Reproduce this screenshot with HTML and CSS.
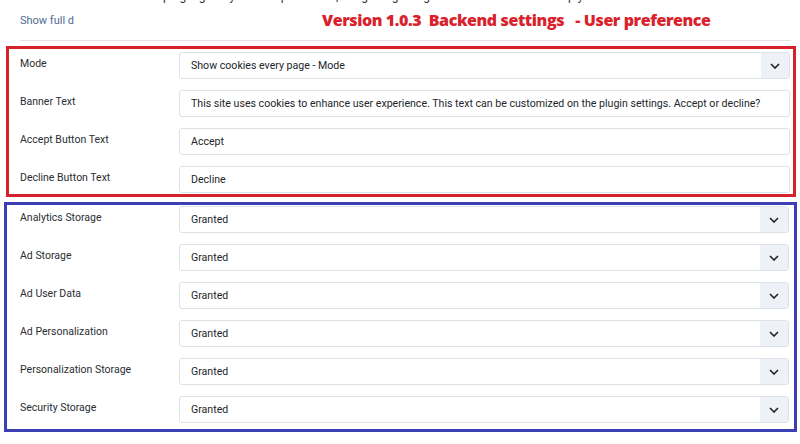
FILE: index.html
```html
<!DOCTYPE html>
<html>
<head>
<meta charset="utf-8">
<link rel="stylesheet" href="styles.css">
</head>
<body>
<div class="page">
  <p class="desc">The plugin gives you a simple banner, integrating Google Consent Mode v2 to help your site stay compliant.</p>
  <div class="header">
    <span class="more">Show full description</span>
    <span class="title">Version 1.0.3  Backend settings   - User preference</span>
  </div>
  <div class="divider"></div>

  <div class="box box-red">
    <div class="row">
      <label class="label">Mode</label>
      <div class="select"><span class="value">Show cookies every page - Mode</span><span class="arrow"><svg viewBox="0 0 10 6" width="10" height="6"><path d="M1 1 L5 5 L9 1" fill="none" stroke="#1f2328" stroke-width="1.6"/></svg></span></div>
    </div>
    <div class="row">
      <label class="label">Banner Text</label>
      <div class="input"><span class="value">This site uses cookies to enhance user experience. This text can be customized on the plugin settings. Accept or decline?</span></div>
    </div>
    <div class="row">
      <label class="label">Accept Button Text</label>
      <div class="input"><span class="value">Accept</span></div>
    </div>
    <div class="row">
      <label class="label">Decline Button Text</label>
      <div class="input"><span class="value">Decline</span></div>
    </div>
  </div>

  <div class="box box-blue">
    <div class="row">
      <label class="label">Analytics Storage</label>
      <div class="select"><span class="value">Granted</span><span class="arrow"><svg viewBox="0 0 10 6" width="10" height="6"><path d="M1 1 L5 5 L9 1" fill="none" stroke="#1f2328" stroke-width="1.6"/></svg></span></div>
    </div>
    <div class="row">
      <label class="label">Ad Storage</label>
      <div class="select"><span class="value">Granted</span><span class="arrow"><svg viewBox="0 0 10 6" width="10" height="6"><path d="M1 1 L5 5 L9 1" fill="none" stroke="#1f2328" stroke-width="1.6"/></svg></span></div>
    </div>
    <div class="row">
      <label class="label">Ad User Data</label>
      <div class="select"><span class="value">Granted</span><span class="arrow"><svg viewBox="0 0 10 6" width="10" height="6"><path d="M1 1 L5 5 L9 1" fill="none" stroke="#1f2328" stroke-width="1.6"/></svg></span></div>
    </div>
    <div class="row">
      <label class="label">Ad Personalization</label>
      <div class="select"><span class="value">Granted</span><span class="arrow"><svg viewBox="0 0 10 6" width="10" height="6"><path d="M1 1 L5 5 L9 1" fill="none" stroke="#1f2328" stroke-width="1.6"/></svg></span></div>
    </div>
    <div class="row">
      <label class="label">Personalization Storage</label>
      <div class="select"><span class="value">Granted</span><span class="arrow"><svg viewBox="0 0 10 6" width="10" height="6"><path d="M1 1 L5 5 L9 1" fill="none" stroke="#1f2328" stroke-width="1.6"/></svg></span></div>
    </div>
    <div class="row">
      <label class="label">Security Storage</label>
      <div class="select"><span class="value">Granted</span><span class="arrow"><svg viewBox="0 0 10 6" width="10" height="6"><path d="M1 1 L5 5 L9 1" fill="none" stroke="#1f2328" stroke-width="1.6"/></svg></span></div>
    </div>
  </div>
</div>
</body>
</html>
```

FILE: styles.css
```css
html, body {
  margin: 0;
  padding: 0;
  background: #ffffff;
}
body {
  font-family: Roboto, "Liberation Sans", sans-serif;
  color: #22262a;
  width: 800px;
  height: 444px;
  overflow: hidden;
}
.page {
  padding: 0 3px 0 4px;
}
.desc {
  margin: -11px 0 0 136px;
  width: 460px;
  font-size: 12px;
  line-height: 14px;
  height: 14px;
  color: #333;
  white-space: nowrap;
  overflow: hidden;
}
.header {
  display: flex;
  align-items: center;
  height: 24px;
  padding: 0 0 0 16px;
  margin-top: 5px;
}
.more {
  width: 54px;
  overflow: hidden;
  white-space: nowrap;
  font-size: 11px;
  color: #4e6b94;
}
.title {
  margin-left: 248px;
  white-space: pre;
  font-family: "Open Sans", "Liberation Sans", sans-serif;
  font-weight: 800;
  font-size: 16px;
  color: #d9222c;
  letter-spacing: -0.4px;
}
.divider {
  height: 1px;
  background: #e3e3e3;
  margin: 8px 6px 0 16px;
}
.box {
  border: 3px solid;
  display: flex;
  flex-direction: column;
  gap: 11px;
}
.box-red {
  border-color: #d4212b;
  margin: 5px 1px 0 2px;
  padding: 3px 3px 1px 11px;
}
.box-blue {
  border-color: #3b3fb3;
  margin: 5px 0 0 0;
  padding: 1px 5px 6px 13px;
}
.row {
  display: grid;
  grid-template-columns: 159px 1fr;
  align-items: start;
}
.label {
  font-size: 10.5px;
  line-height: 14px;
  padding-top: 5px;
  color: #2a2e33;
}
.input, .select {
  height: 25px;
  border: 1px solid #dde2e8;
  border-radius: 3px;
  display: flex;
  align-items: center;
  background: #fff;
  overflow: hidden;
}
.value {
  flex: 1;
  padding-left: 11px;
  font-size: 10.6px;
  color: #22262a;
  white-space: nowrap;
  overflow: hidden;
}
.arrow {
  width: 28px;
  height: 100%;
  background: #eef2f8;
  display: flex;
  align-items: center;
  justify-content: center;
}
.arrow svg {
  display: block;
}
```
